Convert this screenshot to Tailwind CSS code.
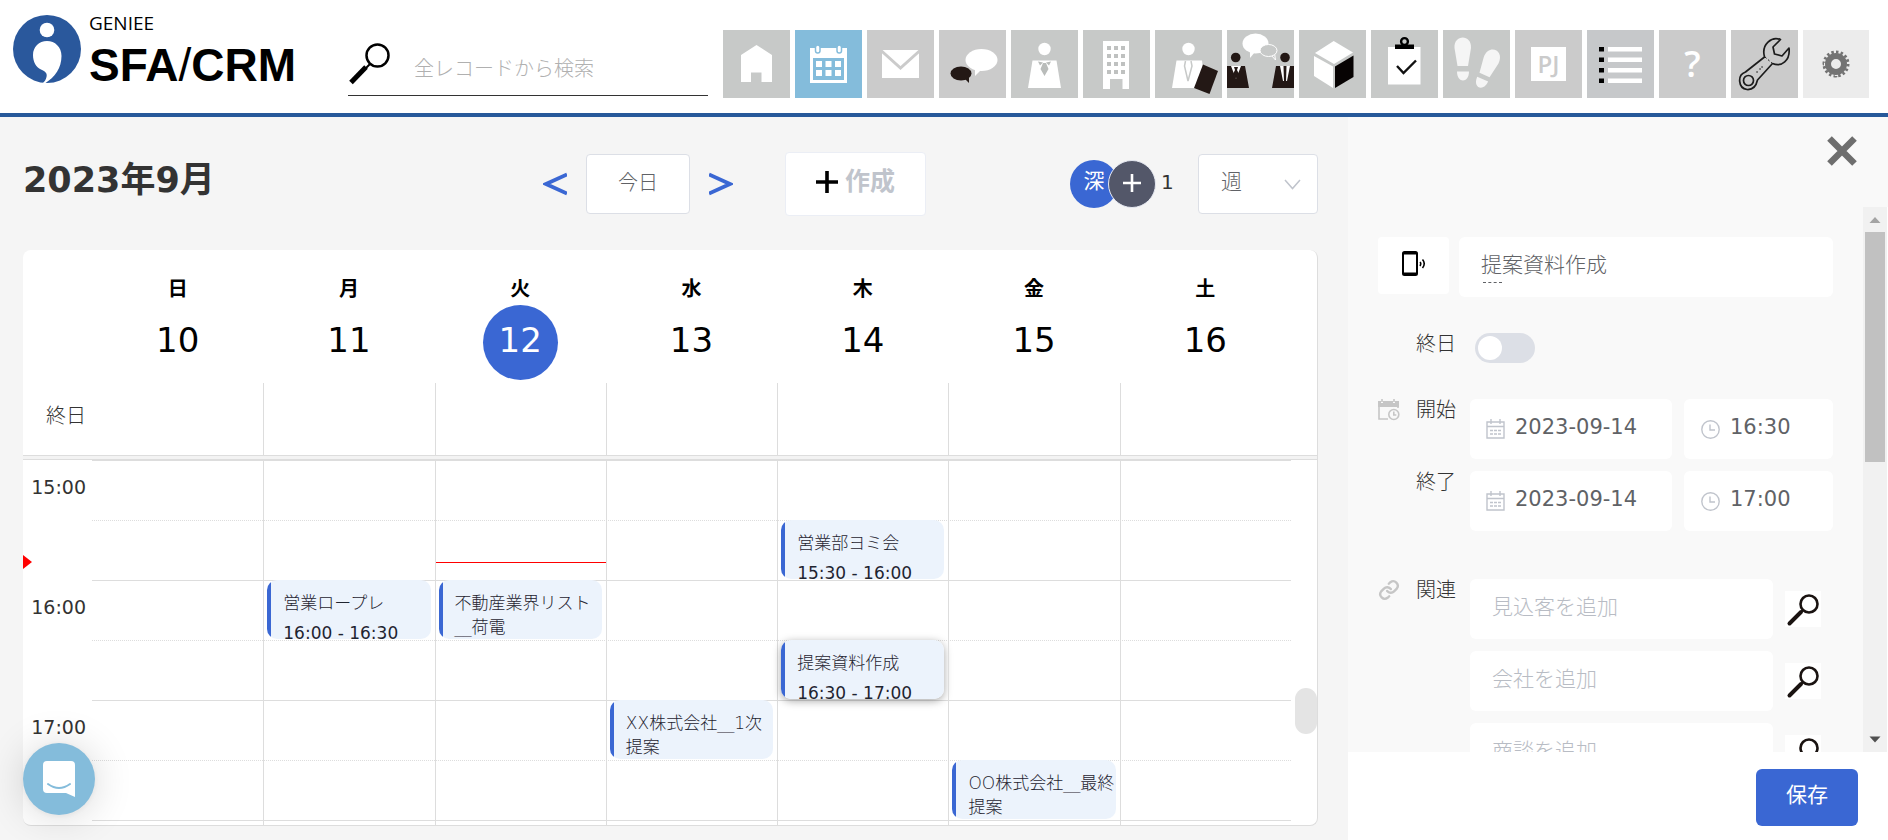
<!DOCTYPE html>
<html lang="ja">
<head>
<meta charset="utf-8">
<title>GENIEE SFA/CRM</title>
<script src="https://cdn.jsdelivr.net/npm/@tailwindcss/browser@4"></script>
</head>
<body class="flex h-screen flex-col overflow-hidden bg-[#f5f5f5] font-['DejaVu_Sans','Noto_Sans_CJK_JP',sans-serif] text-xl text-[#333]">

<header class="flex h-[117px] shrink-0 border-b-4 border-[#27599a] bg-white pr-[19px]">
  <a href="#" class="flex w-[348px] shrink-0 items-start gap-2 pt-[14px] pl-[13px] text-black" aria-label="GENIEE SFA/CRM">
    <svg class="mt-px h-[68px] w-[68px] shrink-0" viewBox="0 0 68 68"><circle cx="34" cy="34" r="34" fill="#2a589c"/><circle cx="34" cy="15" r="7.300" fill="#fff"/><path d="M34 26c-8 0-14 6-14 14 0 7 3 12 8 14.500 4.500 2 6.500 4 5.500 7.500-.5 2.500-2 4.500-3.500 6h2.500C42 62 48.500 53 48.500 41 48.500 32 42 26 34 26z" fill="#fff"/></svg>
    <span class="flex flex-col gap-[9px]">
      <span class="font-['Open_Sans',sans-serif] text-[19px] leading-[19px]">GENIEE</span>
      <span class="font-['Liberation_Sans',sans-serif] text-[46px] leading-[46px] font-bold whitespace-nowrap">SFA<span class="font-normal">/</span>CRM</span>
    </span>
  </a>
  <label class="mt-[36px] flex h-[60px] min-w-0 flex-1 items-center gap-6 border-b border-[#333]">
    <svg class="-mt-1 h-[42px] w-[42px] shrink-0" viewBox="0 0 42 42" fill="none" stroke="#000"><circle cx="29.500" cy="12.500" r="11" stroke-width="2.500"/><path d="M22 21l-5 5" stroke-width="2"/><path d="M18 24L3 39.500" stroke-width="5"/></svg>
    <input type="text" aria-label="検索" placeholder="全レコードから検索" class="min-w-0 flex-1 bg-transparent pt-[6px] text-xl font-light outline-none placeholder:text-[#b0b0b0]">
  </label>
  <nav class="mt-[30px] ml-[15px] flex shrink-0 items-start gap-[5px]">
    <a href="#" aria-label="ホーム" class="h-[68px] w-[67px] bg-[#c7c9c8]"><svg viewBox="0 0 67 68"><path d="M18 25L33.500 15 49 25v27H38.500v-9.500H28V52H18z" fill="#fff"/></svg></a>
    <a href="#" aria-label="カレンダー" class="h-[68px] w-[67px] bg-[#84bcdb]"><svg viewBox="0 0 67 68"><path d="M15 18h37v35H15z" fill="#fff"/><path d="M18 28h31v22H18z" fill="#84bcdb"/><g fill="#fff"><path d="M21 31h6v6h-6zM30.500 31h6v6h-6zM40 31h6v6h-6zM21 40h6v6h-6zM30.500 40h6v6h-6zM40 40h6v6h-6z"/><rect x="20.500" y="15" width="4.500" height="8" rx="2.250" stroke="#84bcdb" stroke-width="1.500"/><rect x="42" y="15" width="4.500" height="8" rx="2.250" stroke="#84bcdb" stroke-width="1.500"/></g></svg></a>
    <a href="#" aria-label="メール" class="h-[68px] w-[67px] bg-[#cbcbcb]"><svg viewBox="0 0 67 68"><path d="M15 20h37v28H15z" fill="#fff"/><path d="M14 20.500l19.500 17.500L53 20.500" fill="none" stroke="#cbcbcb" stroke-width="3"/></svg></a>
    <a href="#" aria-label="チャット" class="h-[68px] w-[67px] bg-[#cbcbcb]"><svg viewBox="0 0 67 68"><path d="M36 38v8l6-6z" fill="#fff"/><ellipse cx="42.500" cy="30" rx="16" ry="11" fill="#fff"/><g fill="#231815"><ellipse cx="22" cy="43.500" rx="10.500" ry="7"/><path d="M26 49l4 4V47z"/></g></svg></a>
    <a href="#" aria-label="人物" class="h-[68px] w-[67px] bg-[#c7c9c8]"><svg viewBox="0 0 67 68"><circle cx="33.500" cy="19" r="6.200" fill="#fff"/><path d="M21.500 30.500h24L50 58H17z" fill="#fff"/><path d="M27 31.500l5 1-3 3zM40 31.500l-5 1 3 3zM32 33h3l2.500 6-4 7-4-7z" fill="#b9bcba"/></svg></a>
    <a href="#" aria-label="会社" class="h-[68px] w-[67px] bg-[#c7c9c8]"><svg viewBox="0 0 67 68"><path d="M20 11h26v48h-6.500V49H27v10h-7z" fill="#fff"/><path d="M24 16h4v4h-4zM31 16h4v4h-4zM38 16h4v4h-4zM24 24h4v4h-4zM31 24h4v4h-4zM38 24h4v4h-4zM24 32h4v4h-4zM31 32h4v4h-4zM38 32h4v4h-4zM24 40h4v4h-4zM31 40h4v4h-4zM38 40h4v4h-4z" fill="#bfc1c0"/></svg></a>
    <a href="#" aria-label="見込客" class="h-[68px] w-[67px] bg-[#c7c9c8]"><svg viewBox="0 0 67 68"><circle cx="33.500" cy="19" r="6.200" fill="#fff"/><path d="M21.500 30.500H47L50 58H17z" fill="#fff"/><path d="M30.500 31l-1 5 3.500 15 4-15-1-5" fill="none" stroke="#c7c9c8" stroke-width="1.500"/><path d="M48 34.500L63 41 54.500 64 39 58z" fill="#231815"/></svg></a>
    <a href="#" aria-label="商談" class="h-[68px] w-[67px] bg-[#c7c9c8]"><svg viewBox="0 0 67 68"><path d="M23 20v8l5-6z" fill="#fff"/><ellipse cx="28.500" cy="13.500" rx="13" ry="10" fill="#fff"/><path d="M44 25l4.500 5-1-7" fill="#c7c9c8" stroke="#fff"/><ellipse cx="41.500" cy="20.500" rx="8.500" ry="6" fill="#c7c9c8" stroke="#fff"/><g fill="#231815"><circle cx="8.700" cy="27.500" r="4.800"/><circle cx="58" cy="27.500" r="4.800"/><path d="M0 36h18l4 22H0zM49 36h18v22H45z"/></g><path d="M4 36h10l-5 13zM53 36h10l-3 15h-4z" fill="#fff"/><path d="M7 37h4l-1 3 2 4-3 5-3-5 2-4zM56.500 36h3L59 52h-2z" fill="#231815"/></svg></a>
    <a href="#" aria-label="商品" class="h-[68px] w-[67px] bg-[#c7c9c8]"><svg viewBox="0 0 67 68"><path d="M34.700 11L54 22.500 35 34 16 23zM15 26l19 10.500V58L15 46z" fill="#fff"/><path d="M36 36.500L54.500 25.500V47L36 58z" fill="#070303"/></svg></a>
    <a href="#" aria-label="タスク" class="h-[68px] w-[67px] bg-[#c7c9c8]"><svg viewBox="0 0 67 68"><path d="M17 17h32.500v37.500H17z" fill="#fff"/><path d="M24 14.500h19V19H24z"/><circle cx="33.500" cy="11.500" r="3.400" fill="none" stroke="#000" stroke-width="2.400"/><path d="M26 36l6.500 7L45 30.500" fill="none" stroke="#111" stroke-width="2.400"/></svg></a>
    <a href="#" aria-label="足跡" class="h-[68px] w-[67px] bg-[#c7c9c8]"><svg viewBox="0 0 67 68" fill="#f5f5f5"><path d="M14.500 36L11.500 18C10.500 4 29 4 28 18l-3 18zM14 41.500h12c0 12-12 12-12 0z"/><g transform="translate(46 35) rotate(24)"><path d="M-5.500 11L-8-5c-1-15 17-15 16 0L5.500 11zM-6 15.500H6c0 12-12 12-12 0z"/></g></svg></a>
    <a href="#" aria-label="プロジェクト" class="flex h-[68px] w-[67px] items-center justify-center bg-[#cbcbcb]"><span class="flex h-[34px] w-[35px] items-center justify-center bg-white font-['Open_Sans',sans-serif] text-2xl font-semibold text-[#cbcbcb]">PJ</span></a>
    <a href="#" aria-label="リスト" class="h-[68px] w-[67px] bg-[#c6c8ca]"><svg viewBox="0 0 67 68"><path d="M12 17h5v4.500h-5zM12 27.500h5V32h-5zM12 38h5v4.500h-5zM12 48.500h5V53h-5z"/><path d="M21 17h34v4.500H21zM21 27.500h34V32H21zM21 38h34v4.500H21zM21 48.500h34V53H21z" fill="#fff"/></svg></a>
    <a href="#" aria-label="ヘルプ" class="flex h-[68px] w-[67px] items-center justify-center bg-[#cbcbcb] font-['Open_Sans',sans-serif] text-4xl font-semibold text-white">?</a>
    <a href="#" aria-label="ツール" class="h-[68px] w-[67px] bg-[#cbcbcb]"><svg viewBox="0 0 67 68" fill="none" stroke="#1c1c1c" stroke-width="1.700" stroke-linejoin="round"><path d="M49.500 9.500C41 6 30 14 33.500 27L14.500 42C6 45 7 58 16 59.500c7 .5 9.500-5 10.500-9.500L41.500 33.500c9 4 18-3 16.500-15.500L51 26l-7.500-2-1.500-7z"/><circle cx="17.500" cy="50.500" r="5"/><path d="M34 27l8 7" stroke-dasharray="2 2" stroke-width="1"/><path d="M26 42h.1M29 39h.1M31 37h.1" stroke-width="1.500" stroke-linecap="round"/></svg></a>
    <a href="#" aria-label="設定" class="h-[68px] w-[66px] bg-[#ececec]"><svg viewBox="0 0 66 68" fill="none" stroke="#737373"><circle cx="33" cy="34" r="8" stroke-width="6"/><circle cx="33" cy="34" r="12" stroke-width="3" stroke-dasharray="2.500 2.225" pathLength="75.600"/></svg></a>
  </nav>
</header>

<div class="flex min-h-0 flex-1">
  <main class="flex min-w-0 flex-1 flex-col pr-[30px] pl-[23px]">
    <div class="flex h-[133px] shrink-0 items-center">
      <h1 class="flex-1 pb-[6px] text-[35px] leading-none font-bold">2023年9月</h1>
      <button class="w-[24px]" aria-label="前の週"><svg class="h-[24px] w-[24px]" viewBox="0 0 24 24" fill="none" stroke="#3a67d3" stroke-width="3.800"><path d="M24 2.500L3 12l21 9.500"/></svg></button>
      <button class="ml-[19px] h-[60px] w-[104px] rounded border border-[#dcdfe6] bg-white pb-[2px] font-light text-[#606266]">今日</button>
      <button class="ml-[19px] w-[24px]" aria-label="次の週"><svg class="h-[24px] w-[24px]" viewBox="0 0 24 24" fill="none" stroke="#3a67d3" stroke-width="3.800"><path d="M0 2.500L21 12 0 21.500"/></svg></button>
      <button class="ml-[52px] flex h-[64px] w-[141px] items-center justify-center gap-[7px] rounded border border-[#ebeef5] bg-white pb-1 text-[25px] font-bold text-[#c0c4cc]">
        <svg class="h-[22px] w-[22px]" viewBox="0 0 22 22"><path d="M0 11h22M11 0v22" stroke="#000" stroke-width="3.600"/></svg>作成</button>
      <div class="ml-[144px] flex items-center">
        <span class="flex h-[48px] w-[48px] items-center justify-center rounded-full bg-[#3a67d3] pb-1 text-[21px] text-white">深</span>
        <button class="-ml-[10px] flex h-[48px] w-[48px] items-center justify-center rounded-full border border-[#e4e7f0] bg-[#535769] pb-[2px]" aria-label="メンバーを追加"><svg class="h-[18px] w-[18px]" viewBox="0 0 18 18"><path d="M0 9h18M9 0v18" stroke="#fff" stroke-width="2.600"/></svg></button>
        <span class="w-[42px] pb-1 pl-[5px]">1</span>
      </div>
      <div class="relative h-[60px] w-[120px]">
        <select aria-label="表示" class="h-full w-full appearance-none rounded border border-[#dcdfe6] bg-white pb-[2px] pl-[22px] text-[21px] font-light text-[#606266]"><option>週</option></select>
        <svg class="pointer-events-none absolute top-[25px] right-[17px] h-[11px] w-[17px]" viewBox="0 0 17 11" fill="none" stroke="#c0c4cc" stroke-width="1.500"><path d="M1 1l7.500 8.500L16 1"/></svg>
      </div>
    </div>

    <section class="mb-[14px] flex min-h-0 flex-1 flex-col overflow-hidden rounded-lg border-r border-b border-[#ddd] bg-white">
      <div class="flex h-[133px] shrink-0 pr-[26px] pl-[69px] text-black">
        <div class="flex flex-1 flex-col items-center pt-[25px]"><b class="leading-[28px]">日</b><span class="mt-[2px] flex h-[75px] w-[75px] items-center justify-center rounded-full pb-1 text-[34px]">10</span></div>
        <div class="flex flex-1 flex-col items-center pt-[25px]"><b class="leading-[28px]">月</b><span class="mt-[2px] flex h-[75px] w-[75px] items-center justify-center rounded-full pb-1 text-[34px]">11</span></div>
        <div class="flex flex-1 flex-col items-center pt-[25px]"><b class="leading-[28px]">火</b><span class="mt-[2px] flex h-[75px] w-[75px] items-center justify-center rounded-full bg-[#3a67d3] pb-1 text-[34px] text-white">12</span></div>
        <div class="flex flex-1 flex-col items-center pt-[25px]"><b class="leading-[28px]">水</b><span class="mt-[2px] flex h-[75px] w-[75px] items-center justify-center rounded-full pb-1 text-[34px]">13</span></div>
        <div class="flex flex-1 flex-col items-center pt-[25px]"><b class="leading-[28px]">木</b><span class="mt-[2px] flex h-[75px] w-[75px] items-center justify-center rounded-full pb-1 text-[34px]">14</span></div>
        <div class="flex flex-1 flex-col items-center pt-[25px]"><b class="leading-[28px]">金</b><span class="mt-[2px] flex h-[75px] w-[75px] items-center justify-center rounded-full pb-1 text-[34px]">15</span></div>
        <div class="flex flex-1 flex-col items-center pt-[25px]"><b class="leading-[28px]">土</b><span class="mt-[2px] flex h-[75px] w-[75px] items-center justify-center rounded-full pb-1 text-[34px]">16</span></div>
      </div>
      <div class="flex h-[72px] shrink-0 pr-[26px]">
        <div class="w-[69px] pt-[19px] pr-[6px] text-right leading-[28px] font-light">終日</div>
        <div class="grid flex-1 grid-cols-7 [&>*+*]:border-l [&>*+*]:border-[#ddd]"><div></div><div></div><div></div><div></div><div></div><div></div><div></div></div>
      </div>
      <div class="h-[5px] shrink-0 border-y border-[#ddd] bg-[#f3f3f3]"></div>
      <div class="relative flex min-h-0 flex-1 overflow-hidden pr-[26px]">
        <div class="w-[69px] shrink-0 pr-[6px] text-right text-[19px]">
          <div class="h-[120px] pt-[13px] leading-[28px]">15:00</div>
          <div class="h-[120px] pt-[13px] leading-[28px]">16:00</div>
          <div class="h-[120px] pt-[13px] leading-[28px]">17:00</div>
        </div>
        <div class="relative min-w-0 flex-1">
          <div class="absolute inset-x-0 top-0" aria-hidden="true">
            <div class="h-[60px] border-t border-[#ddd]"></div><div class="h-[60px] border-t border-dotted border-[#ddd]"></div>
            <div class="h-[60px] border-t border-[#ddd]"></div><div class="h-[60px] border-t border-dotted border-[#ddd]"></div>
            <div class="h-[60px] border-t border-[#ddd]"></div><div class="h-[60px] border-t border-dotted border-[#ddd]"></div>
            <div class="h-[60px] border-t border-[#ddd]"></div>
          </div>
          <div class="relative grid h-full grid-cols-7 text-[17px] leading-6 font-light text-[#1f2430] [&>*+*]:border-l [&>*+*]:border-[#ddd]">
            <div></div>
            <div class="grid grid-rows-[repeat(7,60px)]">
              <article class="row-start-3 mr-1 ml-[3px] h-[59px] overflow-hidden rounded-[10px] bg-[linear-gradient(to_right,#3a67d3_4px,#ecf3fc_4px)] pt-[11px] pl-4"><p>営業ロープレ</p><p class="mt-[6px] font-normal">16:00 - 16:30</p></article>
            </div>
            <div class="relative grid grid-rows-[repeat(7,60px)]">
              <div class="absolute inset-x-0 top-[102px] h-px bg-[#f00]"></div>
              <article class="row-start-3 mr-1 ml-[3px] h-[59px] overflow-hidden rounded-[10px] bg-[linear-gradient(to_right,#3a67d3_4px,#ecf3fc_4px)] pt-[11px] pl-4"><p>不動産業界リスト<br>__荷電</p></article>
            </div>
            <div class="grid grid-rows-[repeat(7,60px)]">
              <article class="row-start-5 mr-1 ml-[3px] h-[59px] overflow-hidden rounded-[10px] bg-[linear-gradient(to_right,#3a67d3_4px,#ecf3fc_4px)] pt-[11px] pl-4"><p>XX株式会社__1次<br>提案</p></article>
            </div>
            <div class="grid grid-rows-[repeat(7,60px)]">
              <article class="row-start-2 mr-1 ml-[3px] h-[59px] overflow-hidden rounded-[10px] bg-[linear-gradient(to_right,#3a67d3_4px,#ecf3fc_4px)] pt-[11px] pl-4"><p>営業部ヨミ会</p><p class="mt-[6px] font-normal">15:30 - 16:00</p></article>
              <article class="row-start-4 mr-1 ml-[3px] h-[59px] overflow-hidden rounded-[10px] bg-[linear-gradient(to_right,#3a67d3_4px,#ecf3fc_4px)] pt-[11px] pl-4 shadow-[0_2px_8px_rgba(0,0,0,0.35)]"><p>提案資料作成</p><p class="mt-[6px] font-normal">16:30 - 17:00</p></article>
            </div>
            <div class="grid grid-rows-[repeat(7,60px)]">
              <article class="row-start-6 mr-1 ml-[3px] h-[59px] overflow-hidden rounded-[10px] bg-[linear-gradient(to_right,#3a67d3_4px,#ecf3fc_4px)] pt-[11px] pl-4 whitespace-nowrap"><p>OO株式会社__最終<br>提案</p></article>
            </div>
            <div></div>
          </div>
        </div>
        <svg class="absolute top-[95px] left-0 h-[14px] w-[9px]" viewBox="0 0 9 14"><path d="M0 0l9 7-9 7z" fill="red"/></svg>
        <div class="absolute top-[228px] right-0 h-[46px] w-[22px] rounded-full bg-[#e4e4e4]"></div>
      </div>
    </section>
  </main>

  <aside class="flex w-[540px] shrink-0 flex-col bg-[#f9f9f9]">
    <div class="flex h-[90px] shrink-0 items-start justify-end pt-[19px] pr-[31px]">
      <button aria-label="閉じる"><svg class="h-[30px] w-[30px]" viewBox="0 0 30 30"><path d="M2.500 2.500l25 25M27.500 2.500l-25 25" stroke="#6e6e6e" stroke-width="6.500"/></svg></button>
    </div>
    <div class="flex min-h-0 flex-1">
      <form class="flex min-w-0 flex-1 flex-col overflow-hidden px-[30px] pt-[30px] text-[21px] font-light">
        <div class="flex shrink-0 items-start gap-[10px]">
          <button type="button" aria-label="種別" class="flex h-[57px] w-[71px] items-center justify-center rounded bg-white pb-[4px]"><svg class="h-[25px] w-[24px]" viewBox="0 0 24 25"><path fill-rule="evenodd" d="M2.500 0h11A2.500 2.500 0 0116 2.500v20a2.500 2.500 0 01-2.500 2.500h-11A2.500 2.500 0 010 22.500v-20A2.500 2.500 0 012.500 0zM2 3.500v18h12v-18z"/><path d="M18 11q1.500 1.500 0 4M20.500 8.500q3.500 4 0 8.500" fill="none" stroke="#000" stroke-width="1.600"/></svg></button>
          <div class="relative min-w-0 flex-1"><input type="text" aria-label="件名" value="提案資料作成" class="h-[60px] w-full rounded-md bg-white px-[22px] pb-2 text-[#606266] outline-none"><span class="absolute top-[45px] left-6 w-[19px] border-t border-dashed border-[#606266]"></span></div>
        </div>
        <div class="mt-9 grid shrink-0 grid-cols-[38px_54px_minmax(0,1fr)]">
          <label for="allday" class="col-start-2 text-xl leading-[22px]">終日</label>
          <input id="allday" type="checkbox" class="ml-[5px] h-[30px] w-[60px] appearance-none rounded-full bg-[#dcdfe6] p-[3px] before:block before:h-[24px] before:w-[24px] before:rounded-full before:bg-white">
        </div>
        <div class="mt-9 grid shrink-0 grid-cols-[38px_54px_minmax(0,1fr)]">
          <svg class="h-[22px] w-[22px]" viewBox="0 0 22 22" fill="none" stroke="#c6c6c6" stroke-width="1.600"><path d="M1 7v13h9M20 7v2"/><path d="M0 2h3v2h2V2h10v2h2V2h4v6H0z" fill="#c6c6c6" stroke="none"/><path d="M4 0v3M16 0v3"/><circle cx="15.800" cy="15.500" r="5"/><path d="M15.800 12.500v3.500h2.500"/></svg>
          <label for="d1" class="text-xl leading-[22px]">開始</label>
          <div class="grid grid-cols-[minmax(0,1fr)_149px] gap-3">
            <div class="flex h-[60px] items-center gap-[10px] rounded-md bg-white pl-4"><svg class="h-[20px] w-[19px] shrink-0" viewBox="0 0 19 20" fill="none" stroke="#c0c4cc" stroke-width="1.400"><path d="M1 3h17v16H1zM1 7.500h17M5 0v5M14 0v5"/><path d="M4 11.500h11M4 15h11" stroke-dasharray="3 1"/></svg><input id="d1" type="text" value="2023-09-14" class="min-w-0 flex-1 bg-transparent pb-[2px] font-normal text-[#606266] outline-none"></div>
            <div class="flex h-[60px] items-center gap-[10px] rounded-md bg-white pl-[17px]"><svg class="h-[19px] w-[19px] shrink-0" viewBox="0 0 19 19" fill="none" stroke="#c0c4cc" stroke-width="1.400"><circle cx="9.500" cy="9.500" r="8.700"/><path d="M9 4.500V10h5"/></svg><input type="text" aria-label="開始時刻" value="16:30" class="min-w-0 flex-1 bg-transparent pb-[2px] font-normal text-[#606266] outline-none"></div>
          </div>
        </div>
        <div class="mt-3 grid shrink-0 grid-cols-[38px_54px_minmax(0,1fr)]">
          <label for="d2" class="col-start-2 text-xl leading-[22px]">終了</label>
          <div class="grid grid-cols-[minmax(0,1fr)_149px] gap-3">
            <div class="flex h-[60px] items-center gap-[10px] rounded-md bg-white pl-4"><svg class="h-[20px] w-[19px] shrink-0" viewBox="0 0 19 20" fill="none" stroke="#c0c4cc" stroke-width="1.400"><path d="M1 3h17v16H1zM1 7.500h17M5 0v5M14 0v5"/><path d="M4 11.500h11M4 15h11" stroke-dasharray="3 1"/></svg><input id="d2" type="text" value="2023-09-14" class="min-w-0 flex-1 bg-transparent pb-[2px] font-normal text-[#606266] outline-none"></div>
            <div class="flex h-[60px] items-center gap-[10px] rounded-md bg-white pl-[17px]"><svg class="h-[19px] w-[19px] shrink-0" viewBox="0 0 19 19" fill="none" stroke="#c0c4cc" stroke-width="1.400"><circle cx="9.500" cy="9.500" r="8.700"/><path d="M9 4.500V10h5"/></svg><input type="text" aria-label="終了時刻" value="17:00" class="min-w-0 flex-1 bg-transparent pb-[2px] font-normal text-[#606266] outline-none"></div>
          </div>
        </div>
        <div class="mt-12 grid shrink-0 grid-cols-[38px_54px_minmax(0,1fr)]">
          <svg class="h-[22px] w-[22px]" viewBox="0 0 24 24" fill="none" stroke="#c6c6c6" stroke-width="2.600" stroke-linecap="round"><path d="M10 13a5 5 0 007.500.5l3-3a5 5 0 00-7-7L11.800 5.200"/><path d="M14 11a5 5 0 00-7.500-.5l-3 3a5 5 0 007 7l1.700-1.700"/></svg>
          <label for="r1" class="text-xl leading-[22px]">関連</label>
          <div class="flex flex-col gap-3">
            <div class="flex items-center gap-3 pr-3"><input id="r1" type="text" placeholder="見込客を追加" class="h-[60px] min-w-0 flex-1 rounded-md bg-white px-[22px] pb-1 outline-none placeholder:text-[#b8bcc4]"><button type="button" aria-label="見込客を検索" class="bg-white"><svg class="h-9 w-9" viewBox="0 0 36 36" fill="none" stroke="#1a1311"><circle cx="24" cy="13" r="8.500" stroke-width="2.600"/><path d="M17.500 19.500L14 23" stroke-width="2"/><path d="M16 21L4.500 32.500" stroke-width="4" stroke-linecap="round"/></svg></button></div>
            <div class="flex items-center gap-3 pr-3"><input type="text" aria-label="会社" placeholder="会社を追加" class="h-[60px] min-w-0 flex-1 rounded-md bg-white px-[22px] pb-1 outline-none placeholder:text-[#b8bcc4]"><button type="button" aria-label="会社を検索" class="bg-white"><svg class="h-9 w-9" viewBox="0 0 36 36" fill="none" stroke="#1a1311"><circle cx="24" cy="13" r="8.500" stroke-width="2.600"/><path d="M17.500 19.500L14 23" stroke-width="2"/><path d="M16 21L4.500 32.500" stroke-width="4" stroke-linecap="round"/></svg></button></div>
            <div class="flex items-center gap-3 pr-3"><input type="text" aria-label="商談" placeholder="商談を追加" class="h-[60px] min-w-0 flex-1 rounded-md bg-white px-[22px] pb-1 outline-none placeholder:text-[#b8bcc4]"><button type="button" aria-label="商談を検索" class="bg-white"><svg class="h-9 w-9" viewBox="0 0 36 36" fill="none" stroke="#1a1311"><circle cx="24" cy="13" r="8.500" stroke-width="2.600"/><path d="M17.500 19.500L14 23" stroke-width="2"/><path d="M16 21L4.500 32.500" stroke-width="4" stroke-linecap="round"/></svg></button></div>
          </div>
        </div>
      </form>
      <div class="flex w-[24px] shrink-0 flex-col items-center bg-[#f1f1f1]" aria-hidden="true">
        <svg class="h-[25px] w-[20px] shrink-0" viewBox="0 0 20 25"><path d="M4.500 16L10 10l5.500 6z" fill="#a3a3a3"/></svg>
        <div class="h-[230px] w-[20px] bg-[#c1c1c1]"></div>
        <svg class="mt-auto h-[25px] w-[20px] shrink-0" viewBox="0 0 20 25"><path d="M4.500 9.500L10 15.500l5.500-6z" fill="#505050"/></svg>
      </div>
      <div class="w-px bg-white"></div>
    </div>
    <div class="flex h-[88px] shrink-0 items-start justify-end bg-white pt-[17px] pr-[30px]">
      <button class="h-[57px] w-[102px] rounded-md bg-[#3a67d3] pb-1 text-[21px] text-white">保存</button>
    </div>
  </aside>
</div>

<button aria-label="チャットを開く" class="fixed bottom-[25px] left-[23px] flex h-[72px] w-[72px] items-center justify-center rounded-full bg-[#84bcdb] shadow-[0_2px_40px_rgba(0,0,0,0.16),0_1px_6px_rgba(0,0,0,0.06)]">
  <svg class="h-[36px] w-[32px]" viewBox="0 0 32 36"><path d="M4 0h24a4 4 0 014 4v32l-9-4H4a4 4 0 01-4-4V4a4 4 0 014-4z" fill="#fff"/><path d="M5 23q11 8 22 0" fill="none" stroke="#84bcdb" stroke-width="2" stroke-linecap="round"/></svg>
</button>
</body>
</html>
